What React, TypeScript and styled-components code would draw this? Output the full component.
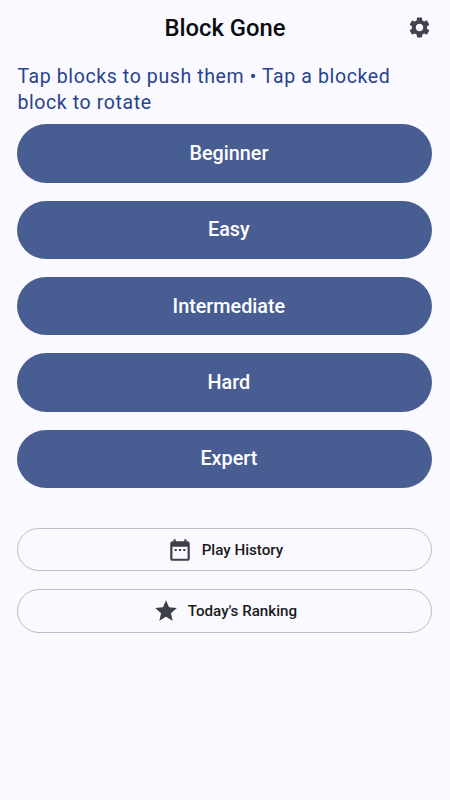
import React from "react";
import styled, { createGlobalStyle } from "styled-components";
import { MdSettings, MdStar, MdDateRange } from "react-icons/md";

const GlobalStyle = createGlobalStyle`
  * { box-sizing: border-box; }
  body { margin: 0; background: #faf9ff; font-family: Roboto, sans-serif; }
  button { font-family: inherit; cursor: pointer; margin: 0; }
`;

const Screen = styled.div`
  height: 800px;
  display: flex;
  flex-direction: column;
  background: #faf9ff;
`;

const TopBar = styled.header`
  height: 56px;
  display: grid;
  grid-template-columns: 61px 1fr 61px;
  align-items: center;
`;

const Title = styled.h1`
  grid-column: 2;
  margin: 0;
  text-align: center;
  font-size: 23.8px;
  font-weight: 500;
  line-height: 30px;
  color: #0b0c10;
`;

const SettingsButton = styled.button`
  display: flex;
  justify-content: center;
  padding: 0 0 1px;
  border: 0;
  background: none;
  color: #41434d;
`;

const Content = styled.main`
  padding: 8px 17.6px 0 17.4px;
`;

const Hint = styled.p`
  margin: 0 0 8.4px;
  font-size: 19.5px;
  line-height: 26px;
  letter-spacing: 0.61px;
  color: #27438d;
`;

const Levels = styled.div`
  display: grid;
  gap: 17.8px;
`;

const LevelButton = styled.button`
  height: 58.5px;
  padding: 0 0 0 8px;
  border: 0;
  border-radius: 30px;
  background: #485d92;
  color: #fff;
  font-size: 19.8px;
  font-weight: 500;
`;

const Links = styled.div`
  display: grid;
  gap: 18px;
  margin-top: 39.7px;
`;

const LinkButton = styled.button`
  height: 43.4px;
  display: flex;
  align-items: center;
  justify-content: center;
  gap: 9px;
  padding: 1px 0 0;
  border: 1px solid #bdbdc5;
  border-radius: 22px;
  background: transparent;
  color: #1a1b21;
  font-size: 15.15px;
  font-weight: 500;
  svg { color: #3d3f49; }
`;

const levels = ["Beginner", "Easy", "Intermediate", "Hard", "Expert"];

export default function App() {
  return (
    <Screen>
      <GlobalStyle />
      <TopBar>
        <Title>Block Gone</Title>
        <SettingsButton aria-label="Settings"><MdSettings size={25} /></SettingsButton>
      </TopBar>
      <Content>
        <Hint>Tap blocks to push them • Tap a blocked block to rotate</Hint>
        <Levels>
          {levels.map((level) => <LevelButton key={level}>{level}</LevelButton>)}
        </Levels>
        <Links>
          <LinkButton><MdDateRange size={26} />Play History</LinkButton>
          <LinkButton><MdStar size={26} />Today's Ranking</LinkButton>
        </Links>
      </Content>
    </Screen>
  );
}
